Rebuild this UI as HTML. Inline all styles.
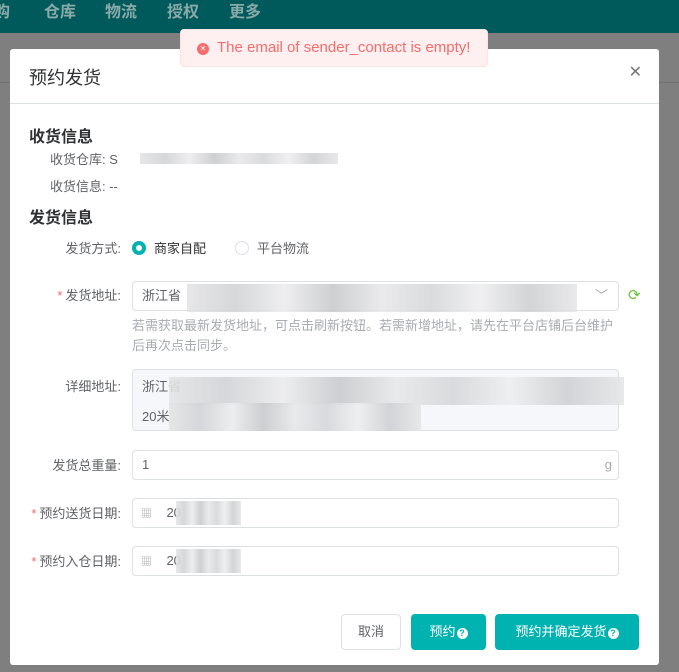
<!DOCTYPE html>
<html><head><meta charset="utf-8"><style>
*{box-sizing:border-box;margin:0;padding:0}
body{width:679px;height:672px;overflow:hidden;background:#7f7f7f;font-family:"Liberation Sans","Noto Sans CJK SC",sans-serif;position:relative;font-size:13px;color:#606266}
.top{position:absolute;left:0;top:0;width:679px;height:33px;background:#005a5b;color:#8aa9a9;font-size:16px;font-weight:bold}
.top span{position:absolute;top:-2px}
.bgline{position:absolute;left:0;height:1px;background:#6e6e6e;width:679px}
.modal{position:absolute;left:10px;top:49px;width:649px;height:616px;background:#fff;border-radius:3px}
.title{position:absolute;left:19px;top:15px;font-size:18px;color:#303133}
.close{position:absolute;right:17px;top:13px;font-size:16px;color:#777;font-weight:300}
.hr{position:absolute;left:0;top:54px;width:649px;height:1px;background:#dcdfe6}
.sec{position:absolute;left:19px;font-size:16px;font-weight:bold;color:#303133}
.lbl{position:absolute;right:538px;white-space:nowrap;color:#606266;font-size:13px}
.star{color:#f56c6c;margin-right:3px}
.inp{position:absolute;left:122px;width:487px;height:30px;border:1px solid #dcdfe6;border-radius:4px;background:#fff;padding-left:9px;line-height:28px;color:#606266}
.blur{position:absolute;background:linear-gradient(90deg,#e4e4e6,#d2d3d6,#ececee,#c9cacd,#e8e8ea,#d6d7da,#eeeeef,#cfd0d3,#e6e6e8);opacity:.9}
.tip{position:absolute;left:122px;top:267px;width:482px;font-size:13px;color:#a8abb2;line-height:20px}
.btn{position:absolute;top:565px;height:36px;border-radius:4px;font-size:13px;line-height:36px;text-align:center}
.q{display:inline-block;width:11px;height:11px;border-radius:50%;background:#fff;color:#00b2b0;font-size:9px;line-height:11px;font-weight:bold;vertical-align:0;margin-left:1px}
</style></head><body>
<div class="top"><span style="left:-6px">购</span><span style="left:44px">仓库</span><span style="left:105px">物流</span><span style="left:167px">授权</span><span style="left:229px">更多</span></div>
<div class="bgline" style="top:82px"></div>
<div class="modal">
<div class="title">预约发货</div>
<div class="close">✕</div>
<div class="hr"></div>
<div class="sec" style="top:74px">收货信息</div>
<div style="position:absolute;left:40px;top:100px">收货仓库: S</div>
<div class="blur" style="left:130px;top:104px;width:198px;height:11px"></div>
<div style="position:absolute;left:40px;top:127px">收货信息: --</div>
<div class="sec" style="top:155px">发货信息</div>
<div class="lbl" style="top:189px">发货方式:</div>
<div style="position:absolute;left:122px;top:192px;width:14px;height:14px;border-radius:50%;border:4px solid #00b2b0"></div>
<div style="position:absolute;left:144px;top:189px;color:#303133">商家自配</div>
<div style="position:absolute;left:225px;top:192px;width:14px;height:14px;border-radius:50%;border:1px solid #dcdfe6"></div>
<div style="position:absolute;left:247px;top:189px">平台物流</div>
<div class="lbl" style="top:236px"><span class="star">*</span>发货地址:</div>
<div class="inp" style="top:232px">浙江省<span style="position:absolute;right:10px;color:#aaa">﹀</span></div>
<div class="blur" style="left:177px;top:235px;width:390px;height:28px"></div>
<div style="position:absolute;left:618px;top:237px;color:#67c23a;font-size:15px">⟳</div>
<div class="tip">若需获取最新发货地址，可点击刷新按钮。若需新增地址，请先在平台店铺后台维护后再次点击同步。</div>
<div class="lbl" style="top:327px">详细地址:</div>
<div class="inp" style="top:320px;height:62px;background:#f5f7fa;line-height:34px;padding-top:0">浙江省<br><span style="position:relative;top:-4px">20米</span></div>
<div class="blur" style="left:159px;top:328px;width:455px;height:28px"></div>
<div class="blur" style="left:159px;top:354px;width:252px;height:28px"></div>
<div class="lbl" style="top:406px">发货总重量:</div>
<div class="inp" style="top:401px">1<span style="position:absolute;right:6px;color:#aaa">g</span></div>
<div class="lbl" style="top:454px"><span class="star">*</span>预约送货日期:</div>
<div class="inp" style="top:449px;padding-left:8px"><span style="color:#aaa;font-size:11px">▦</span>&nbsp;&nbsp;&nbsp;&nbsp;20</div>
<div class="blur" style="left:166px;top:452px;width:65px;height:24px"></div>
<div class="lbl" style="top:502px"><span class="star">*</span>预约入仓日期:</div>
<div class="inp" style="top:497px;padding-left:8px"><span style="color:#aaa;font-size:11px">▦</span>&nbsp;&nbsp;&nbsp;&nbsp;20</div>
<div class="blur" style="left:166px;top:500px;width:65px;height:24px"></div>
<div class="btn" style="left:331px;width:60px;border:1px solid #dcdfe6;color:#606266;line-height:34px">取消</div>
<div class="btn" style="left:401px;width:75px;background:#00b2b0;color:#fff">预约<span class="q">?</span></div>
<div class="btn" style="left:485px;width:144px;background:#00b2b0;color:#fff">预约并确定发货<span class="q">?</span></div>
</div>
<div style="position:absolute;left:180px;top:29px;width:308px;height:38px;background:#fef0f0;border:1px solid #fde2e2;border-radius:4px;color:#f56c6c;font-size:15px;line-height:36px;padding-left:16px"><span style="display:inline-block;width:12px;height:12px;border-radius:50%;background:#f56c6c;color:#fff;font-size:8px;line-height:12px;text-align:center;vertical-align:1px;margin-right:8px">✕</span>The email of sender_contact is empty!</div>
</body></html>
